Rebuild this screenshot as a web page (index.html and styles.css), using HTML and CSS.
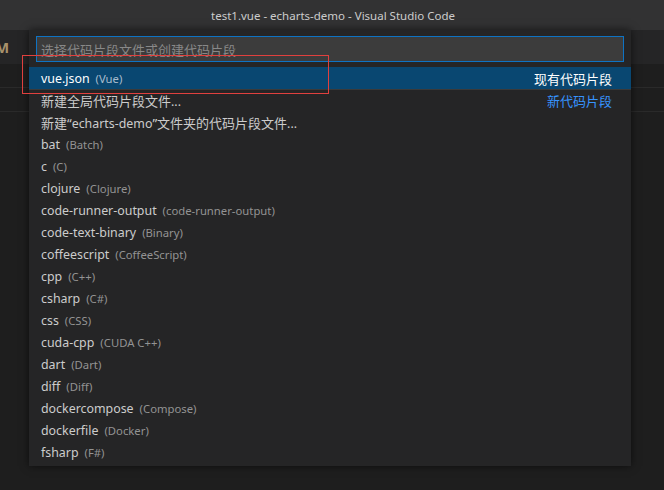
FILE: index.html
```html
<!DOCTYPE html>
<html lang="zh-CN">
<head>
<meta charset="utf-8">
<title>test1.vue - echarts-demo - Visual Studio Code</title>
<link rel="stylesheet" href="styles.css">
</head>
<body>
<div class="app">
  <header class="titlebar">test1.vue - echarts-demo - Visual Studio Code</header>
  <div class="tabs"><span class="tab-label">M</span></div>
  <div class="editor">
    <div class="band"></div>
    <div class="band"></div>
    <div class="band rest"></div>
  </div>

  <div class="picker">
    <div class="input"><span class="placeholder cjk">选择代码片段文件或创建代码片段</span></div>
    <ul class="list">
      <li class="row selected"><span class="label">vue.json</span><span class="desc">(Vue)</span><span class="group cjk">现有代码片段</span></li>
      <li class="row sep"><span class="label"><span class="cjk">新建全局代码片段文件</span>...</span><span class="group new cjk">新代码片段</span></li>
      <li class="row"><span class="label"><span class="cjk">新建“</span>echarts-demo<span class="cjk">”文件夹的代码片段文件</span>...</span></li>
      <li class="row"><span class="label">bat</span><span class="desc">(Batch)</span></li>
      <li class="row"><span class="label">c</span><span class="desc">(C)</span></li>
      <li class="row"><span class="label">clojure</span><span class="desc">(Clojure)</span></li>
      <li class="row"><span class="label">code-runner-output</span><span class="desc">(code-runner-output)</span></li>
      <li class="row"><span class="label">code-text-binary</span><span class="desc">(Binary)</span></li>
      <li class="row"><span class="label">coffeescript</span><span class="desc">(CoffeeScript)</span></li>
      <li class="row"><span class="label">cpp</span><span class="desc">(C++)</span></li>
      <li class="row"><span class="label">csharp</span><span class="desc">(C#)</span></li>
      <li class="row"><span class="label">css</span><span class="desc">(CSS)</span></li>
      <li class="row"><span class="label">cuda-cpp</span><span class="desc">(CUDA C++)</span></li>
      <li class="row"><span class="label">dart</span><span class="desc">(Dart)</span></li>
      <li class="row"><span class="label">diff</span><span class="desc">(Diff)</span></li>
      <li class="row"><span class="label">dockercompose</span><span class="desc">(Compose)</span></li>
      <li class="row"><span class="label">dockerfile</span><span class="desc">(Docker)</span></li>
      <li class="row"><span class="label">fsharp</span><span class="desc">(F#)</span></li>
    </ul>
  </div>

  <div class="annotation"></div>
</div>
</body>
</html>
```

FILE: styles.css
```css
* { box-sizing: border-box; }
html, body {
  margin: 0;
  padding: 0;
  background: #1e1e1e;
  overflow: hidden;
}
body {
  font-family: "Noto Sans", "Noto Sans CJK SC", sans-serif;
  color: #cccccc;
}
.app {
  position: relative;
  width: 664px;
  height: 490px;
  display: flex;
  flex-direction: column;
  background: #1e1e1e;
}
.titlebar {
  height: 30px;
  flex: none;
  background: #323233;
  color: #cccccc;
  font-size: 11.5px;
  display: flex;
  align-items: center;
  justify-content: center;
  padding-left: 2px;
}
.tabs {
  height: 34px;
  flex: none;
  background: #252526;
  display: flex;
  align-items: center;
  overflow: hidden;
  padding-left: 1px;
}
.tab-label {
  margin-left: -6px;
  font-weight: bold;
  font-size: 15px;
  color: #a8916b;
}
.editor {
  flex: 1;
  display: flex;
  flex-direction: column;
}
.band {
  height: 24px;
  border-bottom: 1px solid #2a2a2a;
  flex: none;
}
.band.rest {
  flex: 1;
  border-bottom: 0;
}

.picker {
  position: absolute;
  left: 29px;
  top: 30px;
  width: 602px;
  padding: 6px 0 3px;
  background: #252526;
  box-shadow: 0 0 8px rgba(0, 0, 0, 0.6);
}
.input {
  margin: 0 7px;
  height: 26px;
  border: 1px solid #0e73c4;
  background: #3c3c3c;
  padding-left: 4px;
  display: flex;
  align-items: center;
  font-size: 12.4px;
}
.placeholder {
  color: #888888;
}
.cjk {
  font-size: 13px;
}
.list {
  list-style: none;
  margin: 5px 0 0;
  padding: 0;
}
.row {
  height: 22px;
  display: flex;
  align-items: center;
  padding: 0 19px 0 12px;
  font-size: 12.4px;
  white-space: nowrap;
}
.row.selected {
  background: #094771;
  color: #ffffff;
}
.row.sep {
  border-top: 1px solid #3a3a3a;
}
.desc {
  margin-left: 6px;
  font-size: 11.3px;
  color: #939393;
}
.selected .desc {
  color: #a8bccd;
}
.group {
  margin-left: auto;
  color: #ffffff;
}
.group.new {
  color: #3794ff;
}
.annotation {
  position: absolute;
  left: 22px;
  top: 55px;
  width: 307px;
  height: 39px;
  border: 1px solid #e0403e;
}
```
